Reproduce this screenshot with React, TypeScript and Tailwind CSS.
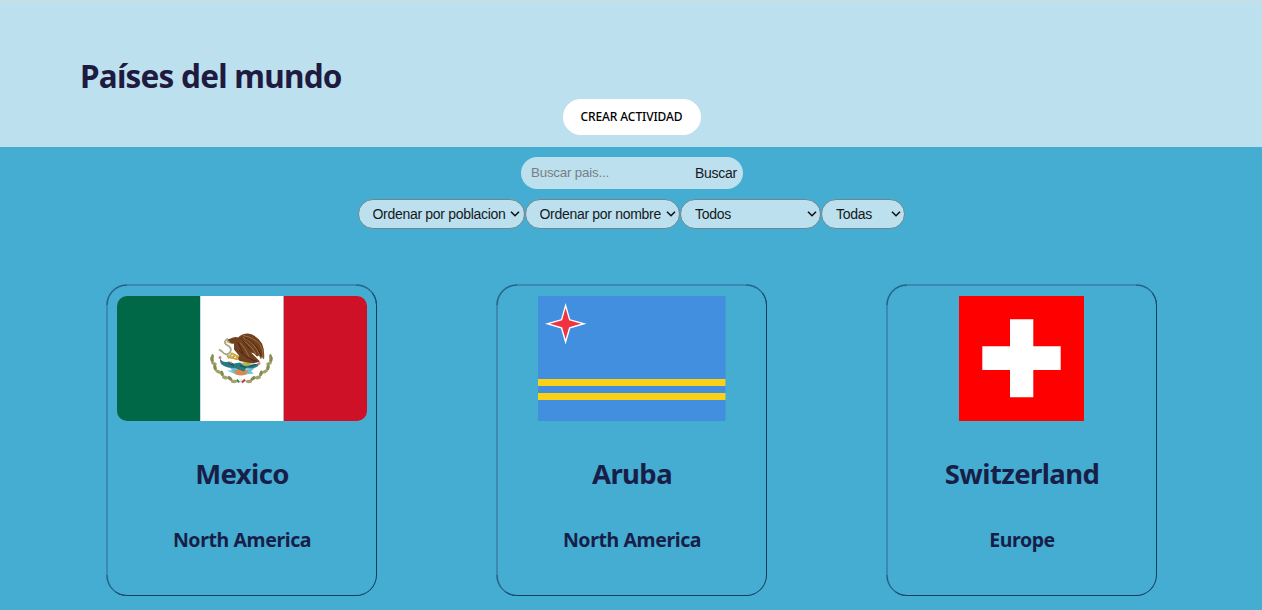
import type { ReactNode } from "react";

const leaves: [number, number, number][] = [
  [12, 38, 75], [14, 42, 20], [15, 46, 80], [18, 50, 25], [22, 52, 70], [25, 56, 15], [30, 57, 40], [34, 60, 0],
  [71, 38, -75], [69, 42, -20], [68, 46, -80], [65, 50, -25], [61, 52, -70], [58, 56, -15], [53, 57, -40], [49, 60, 0],
];

function MexicoFlag() {
  return (
    <svg className="block h-[125px] w-[250px] rounded-[10px]" viewBox="0 0 250 125">
      <rect width="83.3" height="125" fill="#006847" />
      <rect x="83.3" width="83.4" height="125" fill="#fff" />
      <rect x="166.7" width="83.3" height="125" fill="#ce1126" />
      <g transform="translate(83 27.5)">
        <path d="M12 33C13 47 24 57 40 58C58 58 69 47 71 33" fill="none" stroke="#b5ad7c" strokeWidth="0.8" />
        {leaves.map(([x, y, r], i) => (
          <ellipse key={i} cx={x} cy={y - 2} rx="3" ry="1.7" fill={i % 2 ? "#a3a268" : "#858a52"} transform={`rotate(${r} ${x} ${y - 2})`} />
        ))}
        <ellipse cx="12.5" cy="33" rx="1.4" ry="2.5" fill="#8b8c50" />
        <ellipse cx="70.5" cy="33" rx="1.4" ry="2.5" fill="#8b8c50" />
        <path d="M27 47L32 47L29 43L36 45L46 46L55 44L51 48L54 50L45 51L36 51Z" fill="#6fc1dc" />
        <path d="M34 47Q41 44 48 47L46 51Q41 53 36 51Z" fill="#d88b4b" />
        <g transform="translate(0 2)">
          <path d="M20 33Q23 38 29 36L34 38L40 37L45 40L52 39L59 38Q59 42 51 43L46 43L44 46L36 43L28 42Q20 40 20 35Z" fill="#287b80" />
          <path d="M29 38L34 40M40 40L46 42M49 41L56 39" stroke="#174f5e" strokeWidth="1.2" />
          <path d="M42 37L52 36L50 40L43 40Z" fill="#b9b44c" />
          <g fill="#dc7c83">
            <circle cx="20" cy="32" r="1.5" /><circle cx="31" cy="37" r="1.1" /><circle cx="59" cy="38" r="1.5" />
          </g>
          <path d="M28 13Q23 16 26 19Q33 22 30 27Q26 31 22 26L19 24M27 30Q31 34 35 30" fill="none" stroke="#a3a984" strokeWidth="1.8" />
          <path d="M28 14L33 12Q36 11 38 12Q42 8 48 8Q56 9 62 18Q65 25 64 34L62 31L61 34L59 30L57 31L54 28L51 27L60 36L53 38L42 36Q36 35 39 30L34 24L34 18Q31 19 27 16Z" fill="#70411f" />
          <path d="M43 10Q54 12 60 19Q64 25 63 33M43 12Q54 16 60 30M41 14Q52 20 56 29M40 17Q45 22 49 31" fill="none" stroke="#a96c35" strokeWidth="1" />
          <path d="M45 12Q56 17 61 30M41 13L51 25M39 25Q46 33 57 36M38 17L43 28" fill="none" stroke="#3f2519" strokeWidth="0.9" />
          <path d="M28 33L32 28L38 31L35 34M30 32L38 34" fill="none" stroke="#d7a32f" strokeWidth="1.8" />
          <path d="M28 15L26 17L31 17Z" fill="#dcac3e" />
        </g>
        <path d="M37 56L39 59" stroke="#39865c" strokeWidth="2" />
        <path d="M41 56V59" stroke="#ddd" strokeWidth="1.5" />
        <path d="M45 56L42 59" stroke="#b83c56" strokeWidth="2" />
      </g>
    </svg>
  );
}

function ArubaFlag() {
  return (
    <svg className="block h-[125px] w-[188px]" viewBox="0 0 188 125">
      <rect width="187.5" height="125" fill="#418fde" />
      <rect y="83" width="187.5" height="7" fill="#fbd116" />
      <rect y="97" width="187.5" height="7" fill="#fbd116" />
      <path d="M27.6 7L32.2 23.2L48.4 27.8L32.2 32.4L27.6 48.4L23 32.4L7 27.8L23 23.2Z" fill="#fff" />
      <path d="M27.6 12L31.1 24.3L43.2 27.8L31.1 31.3L27.6 43.2L24.1 31.3L12 27.8L24.1 24.3Z" fill="#ef3340" />
    </svg>
  );
}

function SwitzerlandFlag() {
  return (
    <svg className="mr-px block size-[125px]" viewBox="0 0 125 125">
      <rect width="125" height="125" fill="#f00" />
      <path d="M51 23.3H74.3V50.3H101.7V74H74.3V101.3H51V74H23.3V50.3H51Z" fill="#fff" />
    </svg>
  );
}

function CountryCard({ name, continent, flag }: { name: string; continent: string; flag: ReactNode }) {
  return (
    <article className="relative flex h-[312px] w-[271px] flex-col items-center rounded-[21px] border-t-2 border-r border-b border-l-2 border-t-[#3a89b0] border-r-[#123c60] border-b-[#123c60] border-l-[#3a89b0] pt-[10px] text-[#171f49]">
      <svg className="pointer-events-none absolute -top-[2px] -left-[2px] h-[312px] w-[271px]" fill="none" stroke="#1c5378" strokeWidth="0.9">
        <path d="M1 21A20 20 0 0 1 21 1M250 1A20 20 0 0 1 270.5 21M1 291A20 20 0 0 0 21 311.5" />
      </svg>
      {flag}
      <h2 className="mt-[31px] text-[27.5px] leading-[44px] font-bold tracking-[-0.6px]">{name}</h2>
      <h3 className="mt-[29px] text-[19.5px] leading-[30px] font-bold tracking-[-0.4px]">{continent}</h3>
    </article>
  );
}

function FilterSelect({ label, width }: { label: string; width: string }) {
  return (
    <div className={`relative ${width}`}>
      <select className="h-[30px] w-full appearance-none rounded-[16px] border border-[#6c8791] bg-[#bce0ee] pl-[14px]">
        <option>{label}</option>
      </select>
      <svg className="pointer-events-none absolute top-[11px] right-[4.5px] h-[8px] w-[10px]" viewBox="0 0 10 8" fill="none" stroke="#111" strokeWidth="1.6">
        <path d="M1 1.7L5 5.7L9 1.7" />
      </svg>
    </div>
  );
}

export default function App() {
  return (
    <div className="h-[610px] overflow-hidden bg-[#45add1] font-['Noto_Sans',sans-serif]">
      <header className="flex h-[147px] flex-col border-t border-[#cddce0] bg-[#bce0ee]">
        <h1 className="mt-[51px] ml-[80px] h-[47px] text-[31.5px] leading-[48px] font-bold tracking-[-0.77px] text-[#1f1b40]">Países del mundo</h1>
        <button className="ml-[562.5px] h-[36px] w-[138px] rounded-full bg-white text-[12px] font-medium tracking-[-0.1px] text-black">CREAR ACTIVIDAD</button>
      </header>
      <form className="mt-[10px] ml-[520.5px] flex h-[32px] w-[222.5px] items-center justify-between rounded-full bg-[#bce0ee] pr-[6px] pl-[10.5px] font-['Liberation_Sans',sans-serif] text-[14px] text-[#15191c]">
        <input className="w-[150px] text-[13.33px] tracking-[-0.2px] placeholder:text-[#777f83]" placeholder="Buscar pais..." />
        <button type="button" className="tracking-[-0.25px]">Buscar</button>
      </form>
      <div className="mt-[10px] ml-[357.5px] flex h-[30px] font-['Liberation_Sans',sans-serif] text-[14px] tracking-[-0.3px] text-[#15191c]">
        <FilterSelect label="Ordenar por poblacion" width="w-[167px]" />
        <FilterSelect label="Ordenar por nombre" width="w-[155.5px]" />
        <FilterSelect label="Todos" width="w-[141px]" />
        <FilterSelect label="Todas" width="w-[84px]" />
      </div>
      <main className="mt-[55px] ml-[106px] flex gap-[119px]">
        <CountryCard name="Mexico" continent="North America" flag={<MexicoFlag />} />
        <CountryCard name="Aruba" continent="North America" flag={<ArubaFlag />} />
        <CountryCard name="Switzerland" continent="Europe" flag={<SwitzerlandFlag />} />
      </main>
    </div>
  );
}
